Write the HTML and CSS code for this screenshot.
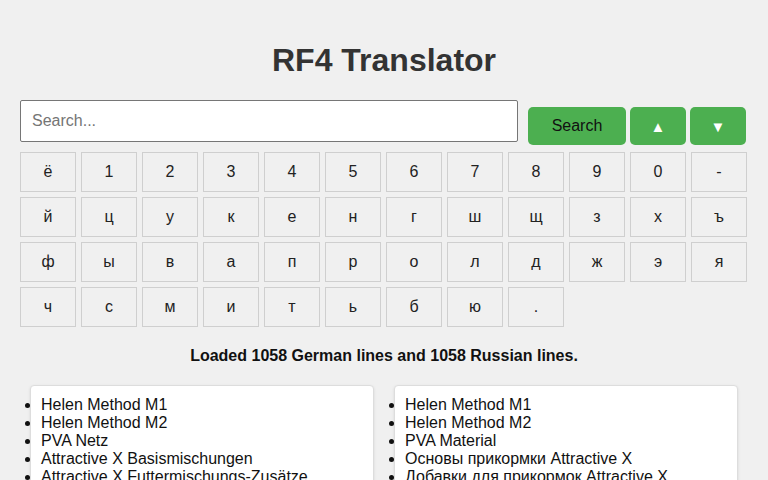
FILE: index.html
```html
<!DOCTYPE html>
<html>
<head>
    <title>RF4 Translator</title>
    <meta charset="utf-8">
    <meta name="viewport" content="width=device-width, initial-scale=1">
    <link rel="stylesheet" href="styles.css">
</head>
<body>
    <h1>RF4 Translator</h1>

    <div class="search-row">
        <input type="text" id="search" class="search-input" placeholder="Search...">
        <button class="btn btn-search">Search</button>
        <button class="btn btn-nav">&#9650;</button>
        <button class="btn btn-nav">&#9660;</button>
    </div>

    <div class="keyboard">
        <button class="key">ё</button><button class="key">1</button><button class="key">2</button><button class="key">3</button>
        <button class="key">4</button><button class="key">5</button><button class="key">6</button><button class="key">7</button>
        <button class="key">8</button><button class="key">9</button><button class="key">0</button><button class="key">-</button>

        <button class="key">й</button><button class="key">ц</button><button class="key">у</button><button class="key">к</button>
        <button class="key">е</button><button class="key">н</button><button class="key">г</button><button class="key">ш</button>
        <button class="key">щ</button><button class="key">з</button><button class="key">х</button><button class="key">ъ</button>

        <button class="key">ф</button><button class="key">ы</button><button class="key">в</button><button class="key">а</button>
        <button class="key">п</button><button class="key">р</button><button class="key">о</button><button class="key">л</button>
        <button class="key">д</button><button class="key">ж</button><button class="key">э</button><button class="key">я</button>

        <button class="key">ч</button><button class="key">с</button><button class="key">м</button><button class="key">и</button>
        <button class="key">т</button><button class="key">ь</button><button class="key">б</button><button class="key">ю</button>
        <button class="key">.</button>
    </div>

    <p class="status">Loaded 1058 German lines and 1058 Russian lines.</p>

    <div class="results">
        <div class="result-box">
            <ul>
                <li>Helen Method M1</li>
                <li>Helen Method M2</li>
                <li>PVA Netz</li>
                <li>Attractive X Basismischungen</li>
                <li>Attractive X Futtermischungs-Zusätze</li>
            </ul>
        </div>
        <div class="result-box">
            <ul>
                <li>Helen Method M1</li>
                <li>Helen Method M2</li>
                <li>PVA Material</li>
                <li>Основы прикормки Attractive X</li>
                <li>Добавки для прикормок Attractive X</li>
            </ul>
        </div>
    </div>
</body>
</html>
```

FILE: styles.css
```css
body {
    font-family: "Liberation Sans", Arial, sans-serif;
    margin: 0;
    padding: 20px;
    background: #f0f0f0;
    color: #111;
}
h1 {
    text-align: center;
    color: #333;
    font-size: 32px;
    margin: 22px 0 21px;
}
.search-row {
    display: flex;
    align-items: flex-start;
}
.search-input {
    width: 498px;
    height: 42px;
    box-sizing: border-box;
    padding: 0 11px;
    font-family: inherit;
    font-size: 16px;
    border: 1px solid #767676;
    border-radius: 2px;
    background: white;
    margin: 0 10px 0 0;
}
.search-input::placeholder { color: #757575; }
.btn {
    height: 38px;
    margin-top: 7px;
    border: none;
    border-radius: 5px;
    background: #4caf50;
    font-family: inherit;
    font-size: 16px;
    cursor: pointer;
}
.btn-search { width: 98px; color: #111; }
.btn-nav {
    width: 56px;
    margin-left: 4px;
    color: white;
    font-size: 15px;
}
.keyboard {
    display: grid;
    grid-template-columns: repeat(12, 56px);
    grid-auto-rows: 40px;
    gap: 5px;
    margin-top: 7px;
}
.key {
    background: #f0f0f0;
    border: 1px solid #cfcfcf;
    font-family: inherit;
    font-size: 16px;
    color: #222;
    padding: 0;
}
.status {
    text-align: center;
    font-weight: bold;
    font-size: 16px;
    margin: 20px 0 20px;
}
.results { display: flex; }
.result-box {
    width: 344px;
    margin: 0 10px;
    box-sizing: border-box;
    padding: 10px;
    background: white;
    border: 1px solid #ddd;
    border-radius: 4px;
    box-shadow: 0 1px 3px rgba(0,0,0,0.1);
}
.result-box ul {
    margin: 0;
    padding-left: 0;
    font-size: 16px;
    color: #111;
}
```
